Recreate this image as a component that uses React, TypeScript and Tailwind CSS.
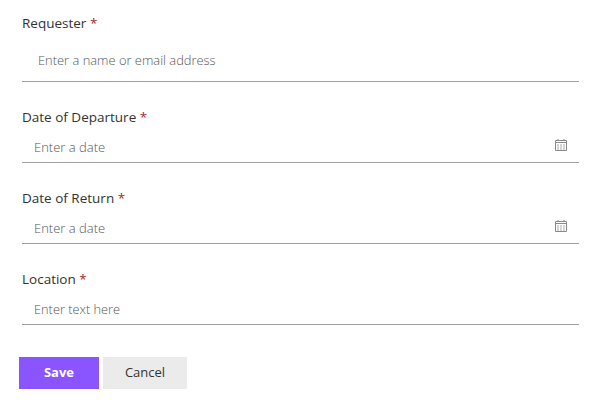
function CalendarIcon() {
  return (
    <svg width="12" height="12" viewBox="0 0 12 12" fill="none" stroke="#8a8a8a" strokeWidth="1" className="shrink-0">
      <path d="M0.5 1.5h11v10h-11z" />
      <path d="M0.5 3.5h11" />
      <path d="M3 0v1.5M9 0v1.5" />
      <path d="M2 6h8M2 8h8M2 10h8" strokeDasharray="2 1" strokeOpacity="0.7" />
    </svg>
  );
}

function Label({ text }: { text: string }) {
  return (
    <p className="h-5 text-[13.5px] leading-5 font-medium text-[#333333]">
      {text} <span className="text-[#a4262c]">*</span>
    </p>
  );
}

function DateField({ label }: { label: string }) {
  return (
    <div className="mt-[25px]">
      <Label text={label} />
      <div className="mt-[4px] flex h-[32px] items-center justify-between border-b border-[#a0a0a0] pl-3 pr-3">
        <span className="pt-[3px] text-[13px] font-light text-[#555555]">Enter a date</span>
        <span className="-mt-[4px]">
          <CalendarIcon />
        </span>
      </div>
    </div>
  );
}

export default function App() {
  return (
    <div className="h-[406px] w-[599px] bg-white pt-[13px] font-['Open_Sans',sans-serif]">
      <div className="ml-[22px] mr-[20px]">
        <Label text="Requester" />
        <div className="mt-[10px] flex h-[39px] items-center border-b border-[#a0a0a0] pb-[2px] pl-4">
          <span className="text-[12.9px] font-light text-[#555555]">Enter a name or email address</span>
        </div>

        <DateField label="Date of Departure" />
        <DateField label="Date of Return" />

        <div className="mt-[25px]">
          <Label text="Location" />
          <div className="mt-[4px] flex h-[32px] items-center border-b border-[#a0a0a0] pl-3">
            <span className="pt-[3px] text-[12.8px] font-light text-[#555555]">Enter text here</span>
          </div>
        </div>
      </div>

      <div className="ml-[19px] mt-[32px] flex gap-1">
        <button className="h-[32px] w-[80px] bg-[#8a54ff] text-[13px] font-bold text-white">Save</button>
        <button className="h-[32px] w-[84px] bg-[#ebebeb] text-[13px] font-medium text-[#333333]">Cancel</button>
      </div>
    </div>
  );
}
